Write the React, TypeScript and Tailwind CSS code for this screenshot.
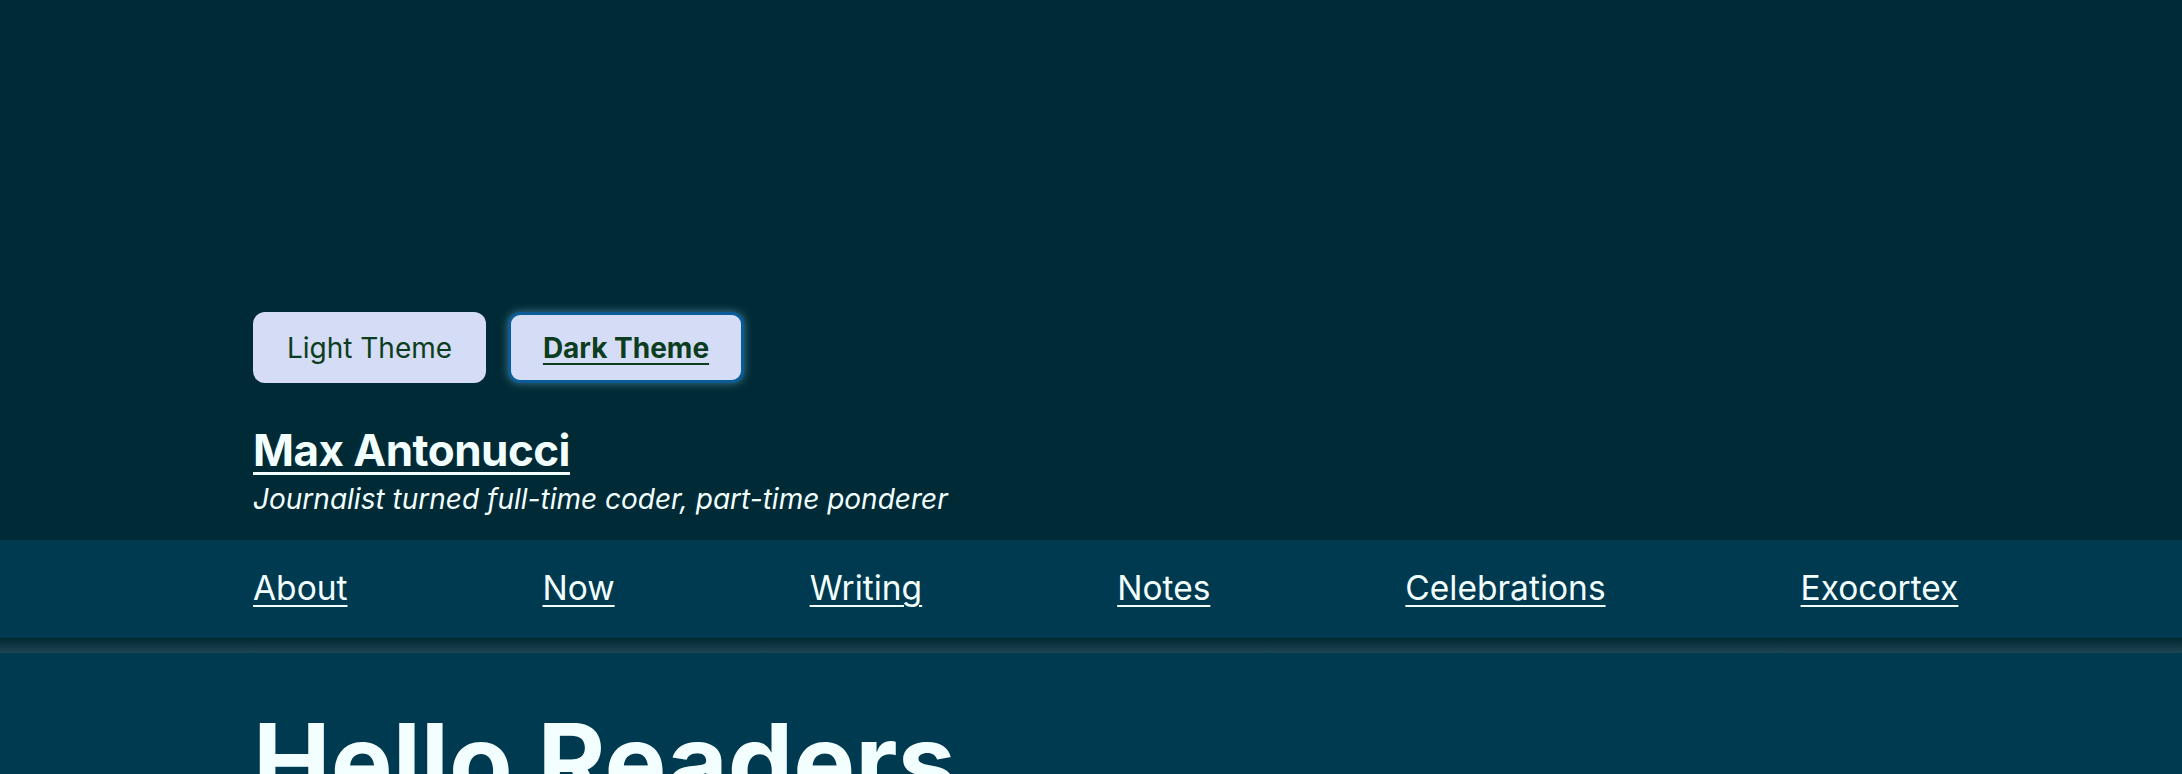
import React, { useState } from 'react';

const links = ['About', 'Now', 'Writing', 'Notes', 'Celebrations', 'Exocortex'];

export default function App() {
  const [theme, setTheme] = useState<'light' | 'dark'>('dark');

  return (
    <div className="min-h-screen bg-[#003a50] text-[#f3fffe] font-['Inter',sans-serif]">
      <header className="bg-[#002b36] pt-[312px] pb-[24px] px-[253px]">
        <div className="flex gap-[22px]">
          <button
            onClick={() => setTheme('light')}
            className={`h-[71px] w-[233px] rounded-[12px] bg-[#d5dcf5] text-[28px] text-[#0b3d1e] ${
              theme === 'light'
                ? 'border-[3px] border-[#0a5b97] font-bold underline decoration-2 underline-offset-[5px] shadow-[0_0_8px_rgba(120,190,220,0.55)]'
                : ''
            }`}
          >
            Light Theme
          </button>
          <button
            onClick={() => setTheme('dark')}
            className={`h-[71px] w-[236px] rounded-[12px] bg-[#d5dcf5] text-[28px] text-[#0b3d1e] ${
              theme === 'dark'
                ? 'border-[3px] border-[#0a5b97] font-bold underline decoration-2 underline-offset-[5px] shadow-[0_0_8px_rgba(120,190,220,0.55)]'
                : ''
            }`}
          >
            Dark Theme
          </button>
        </div>
        <a
          href="#"
          className="mt-[41px] inline-block text-[44px] leading-[53px] font-bold tracking-[-0.012em] underline decoration-[3px] underline-offset-[6px]"
        >
          Max Antonucci
        </a>
        <p className="mt-[5px] text-[28px] leading-[34px] italic">
          Journalist turned full-time coder, part-time ponderer
        </p>
      </header>

      <nav className="h-[98px] bg-[#003a50] px-[253px] flex items-center gap-[195px]">
        {links.map(link => (
          <a
            key={link}
            href="#"
            className="text-[33.5px] leading-none underline decoration-2 underline-offset-[5px]"
          >
            {link}
          </a>
        ))}
      </nav>
      <div className="h-[15px] bg-gradient-to-b from-[#032730] to-[#1c4553]" />

      <main className="px-[253px] pt-[46px]">
        <h1 className="text-[104px] leading-[1.21] font-bold">Hello Readers</h1>
      </main>
    </div>
  );
}
